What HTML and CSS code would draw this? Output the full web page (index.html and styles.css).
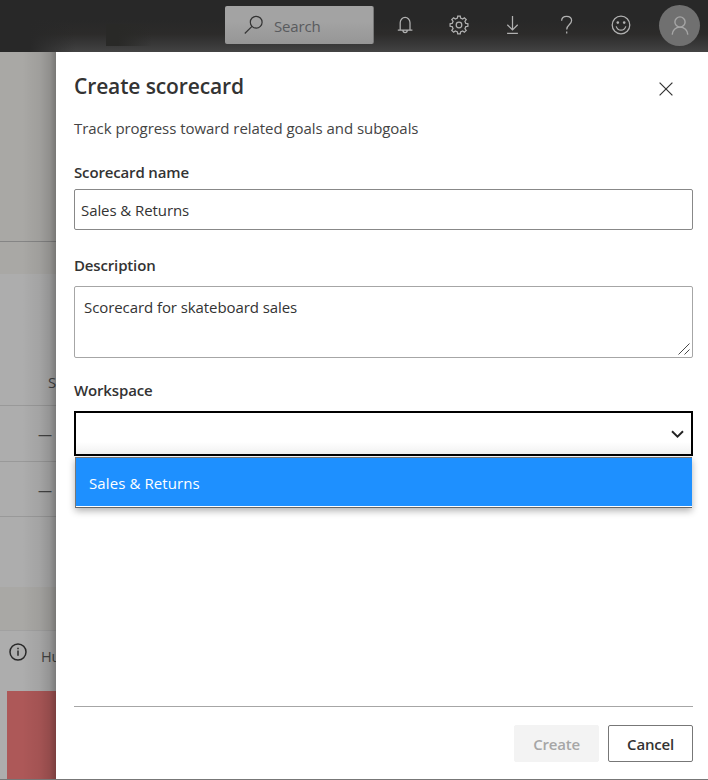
FILE: index.html
```html
<!DOCTYPE html>
<html lang="en">
<head>
<meta charset="utf-8">
<title>Create scorecard</title>
<link rel="stylesheet" href="styles.css">
</head>
<body>
<div class="app">
  <header class="topbar">
    <div class="search">
      <svg width="20" height="20" viewBox="0 0 20 20"><circle cx="12.2" cy="7.2" r="5.9"/><path d="M8 11.4L.8 18.5"/></svg>
      <span class="search-text">Search</span>
    </div>
    <nav class="actions">
      <svg width="18" height="20" viewBox="0 0 18 20"><path d="M4.2 14.6V7.8a4.9 5.4 0 0 1 9.8 0v6.8M1.8 15h14.6M7 15.5a2.1 2 0 0 0 4.2 0"/></svg>
      <svg width="20" height="20" viewBox="0 0 20 20"><path d="M8.42 3.18L8.71 1.1L11.29 1.1L11.58 3.18L13.7 4.06L15.38 2.79L17.21 4.62L15.94 6.3L16.82 8.42L18.9 8.71L18.9 11.29L16.82 11.58L15.94 13.7L17.21 15.38L15.38 17.21L13.7 15.94L11.58 16.82L11.29 18.9L8.71 18.9L8.42 16.82L6.3 15.94L4.62 17.21L2.79 15.38L4.06 13.7L3.18 11.58L1.1 11.29L1.1 8.71L3.18 8.42L4.06 6.3L2.79 4.62L4.62 2.79L6.3 4.06Z"/><circle cx="10" cy="10" r="2.8"/></svg>
      <svg width="18" height="20" viewBox="0 0 18 20"><path d="M8.5 1v13.6M3.3 9.7l5.2 5.2 5.2-5.2M3.1 18.4h10.8"/></svg>
      <svg width="18" height="20" viewBox="0 0 18 20"><path d="M3.6 5.8C3.7 3 5.6 1.3 8.6 1.3s5 1.7 5 4.3c0 4.2-4.9 4.3-4.9 8.8M8.7 16.6v1.8"/></svg>
      <svg width="20" height="20" viewBox="0 0 20 20"><circle cx="10" cy="10" r="8.8"/><path d="M5.2 11.4c.8 2.5 2.6 3.8 4.8 3.8s4-1.3 4.8-3.8"/><circle class="dot" cx="6.8" cy="7.6" r="1.3"/><circle class="dot" cx="13.2" cy="7.6" r="1.3"/></svg>
    </nav>
    <div class="avatar">
      <svg width="20" height="20" viewBox="0 0 20 20"><circle cx="10" cy="6" r="5.1"/><path d="M2.2 18.6c.2-4.4 3.4-7.5 7.8-7.5s7.6 3.1 7.8 7.5"/></svg>
    </div>
  </header>
  <main class="body">
    <section class="report">
      <div class="cell hero"></div>
      <div class="cell gap"></div>
      <div class="cell table-head">S</div>
      <div class="cell row">—</div>
      <div class="cell row second">—</div>
      <div class="cell spare"></div>
      <div class="cell band"></div>
      <div class="info">
        <svg width="18" height="18" viewBox="0 0 18 18"><circle cx="9" cy="9" r="8"/><path d="M9 7.5v5.2M9 4.8v1.5"/></svg>
        <span>Hu</span>
      </div>
      <div class="tile"></div>
    </section>
    <form class="panel">
      <div class="heading">
        <h1>Create scorecard</h1>
        <svg class="close" width="14" height="14" viewBox="0 0 14 14"><path d="M.6.6l12.8 12.8M13.4.6L.6 13.4"/></svg>
      </div>
      <p class="intro">Track progress toward related goals and subgoals</p>
      <label class="name-label">Scorecard name</label>
      <div class="field name">Sales &amp; Returns</div>
      <label class="desc-label">Description</label>
      <div class="field desc"><span>Scorecard for skateboard sales</span>
        <svg class="grip" width="14" height="14" viewBox="0 0 14 14"><path d="M1.5 12.5l11-11M7.5 12.5l5-5"/></svg>
      </div>
      <label class="work-label">Workspace</label>
      <div class="select">
        <svg width="13" height="9" viewBox="0 0 13 9"><path d="M1 1.3l5.5 5.4L12 1.3"/></svg>
      </div>
      <div class="options"><div class="option">Sales &amp; Returns</div></div>
      <footer class="footer">
        <div class="button disabled">Create</div>
        <div class="button">Cancel</div>
      </footer>
    </form>
  </main>
</div>
</body>
</html>
```

FILE: styles.css
```css
* { box-sizing: border-box; }
body {
  margin: 0;
  font-family: "Open Sans", "Noto Sans", sans-serif;
  font-size: 15px;
  color: #333;
}
svg { display: block; flex: none; fill: none; stroke: currentColor; }
.app {
  width: 708px;
  height: 780px;
  display: flex;
  flex-direction: column;
  overflow: hidden;
  border-bottom: 1px solid #777;
}
.topbar {
  height: 52px;
  flex: none;
  display: flex;
  align-items: flex-start;
  padding-left: 225px;
  color: #b1b1b1;
  background:
    linear-gradient(90deg, #282828 0 30px, transparent 75px),
    linear-gradient(90deg, #292927, #292927 12px, transparent) 106px 24px / 46px 22px no-repeat,
    linear-gradient(#282828 20px, #2c2b2a 34px, #383838 44px, #444 52px);
}
.search {
  width: 149px;
  height: 38px;
  margin-top: 6px;
  display: flex;
  align-items: center;
  padding-left: 19px;
  gap: 10px;
  border-radius: 2px;
  border-right: 1px solid #777;
  background: linear-gradient(#a3a3a3 40%, #969696);
  color: #333;
}
.search svg { stroke-width: 1.2; }
.search-text { color: #595b5e; font-size: 15px; letter-spacing: -.15px; position: relative; top: 1px; }
.actions {
  display: grid;
  grid-template-columns: repeat(5, 54px);
  justify-items: center;
  padding: 15px 0 0 4px;
}
.actions svg { stroke-width: 1.25; }
.actions .dot { fill: currentColor; stroke: none; }
.avatar {
  width: 41px;
  height: 41px;
  margin: 5px 0 0 11px;
  display: grid;
  place-items: center;
  border-radius: 50%;
  background: #707070;
  color: #a6a6a6;
}
.avatar svg { stroke-width: 1.4; }
.body { flex: 1; min-height: 0; display: grid; grid-template-columns: 56px 652px; }
.report {
  position: relative;
  overflow: hidden;
  background: #adadad;
  color: #444;
}
.report::after {
  content: "";
  position: absolute;
  inset: 0;
  background: linear-gradient(90deg, transparent 22px, rgba(0,0,0,.06) 40px, rgba(0,0,0,.15) 50px, rgba(0,0,0,.29));
}
.cell { border-bottom: 1px solid #999; }
.hero { height: 190px; background: #a9a8a5; border-color: #858585; }
.gap { height: 32px; background: #a9a8a5; border: 0; }
.table-head { height: 132px; padding: 98px 0 0 48px; line-height: 20px; font-size: 15px; }
.row { height: 56px; padding-left: 38px; line-height: 58px; font-size: 14px; }
.second { height: 55px; }
.spare { height: 70px; border: 0; }
.band { height: 44px; background: #a9a8a5; border-color: #a1a1a1; }
.info { height: 60px; display: flex; padding: 12px 0 0 9px; gap: 14px; }
.info svg { stroke: #282828; stroke-width: 1.5; }
.info span { line-height: 27px; font-size: 14.5px; letter-spacing: -.2px; }
.tile { height: 88px; margin-left: 7px; background: #ad5858; }
.panel {
  display: flex;
  flex-direction: column;
  padding: 0 15px 0 18px;
  background: #fff;
}
.heading { height: 63px; display: flex; justify-content: space-between; padding-top: 18px; }
h1 { margin: 0; font-size: 21px; line-height: 32px; font-weight: 600; letter-spacing: -.12px; }
.close { margin: 12px 20px 0 0; stroke-width: 1.2; }
.intro { margin: 0; line-height: 26px; letter-spacing: -.05px; color: #444; }
label { line-height: 22px; font-size: 15px; font-weight: 600; letter-spacing: -.15px; }
.name-label { margin-top: 20px; }
.desc-label { margin-top: 25px; }
.work-label { margin-top: 22px; }
.field { border: 1px solid #888; border-radius: 2px; letter-spacing: -.08px; }
.name { height: 41px; margin-top: 6px; padding: 0 6px; line-height: 40px; }
.desc {
  height: 72px;
  margin-top: 9px;
  padding: 9px 1px 1px 9px;
  line-height: 22px;
  display: flex;
  justify-content: space-between;
  border-color: #a6a6a6;
}
.desc-label, .work-label { position: relative; top: -1px; }
.grip { align-self: flex-end; stroke-width: .9; }
.select {
  height: 45px;
  margin-top: 9px;
  border: 2px solid #000;
  display: flex;
  align-items: center;
  justify-content: flex-end;
  padding-right: 7px;
  background: linear-gradient(#fff 29px, #f1f1f1);
}
.select svg { stroke: #222; stroke-width: 1.9; margin-top: 2px; }
.options {
  margin: 1px 1px 0;
  height: 51px;
  border: 1px solid #777;
  border-right: 0;
  border-bottom-color: #666;
  padding-bottom: 1px;
  background: #fff;
  box-shadow: 0 3px 7px rgba(0,0,0,.3);
}
.option {
  height: 48px;
  padding: 1px 13px 0;
  line-height: 48px;
  background: #1e90ff;
  color: #fff;
  letter-spacing: .1px;
}
.footer {
  margin-top: auto;
  height: 73px;
  border-top: 1px solid #a6a6a6;
  padding-top: 18px;
  display: flex;
  justify-content: flex-end;
  gap: 9px;
}
.button {
  width: 85px;
  height: 37px;
  border: 1px solid #777;
  border-radius: 2px;
  text-align: center;
  line-height: 37px;
  font-weight: 600;
  letter-spacing: -.2px;
}
.disabled { background: #f3f3f3; border-color: #f3f3f3; color: #a6a6a6; }
```
